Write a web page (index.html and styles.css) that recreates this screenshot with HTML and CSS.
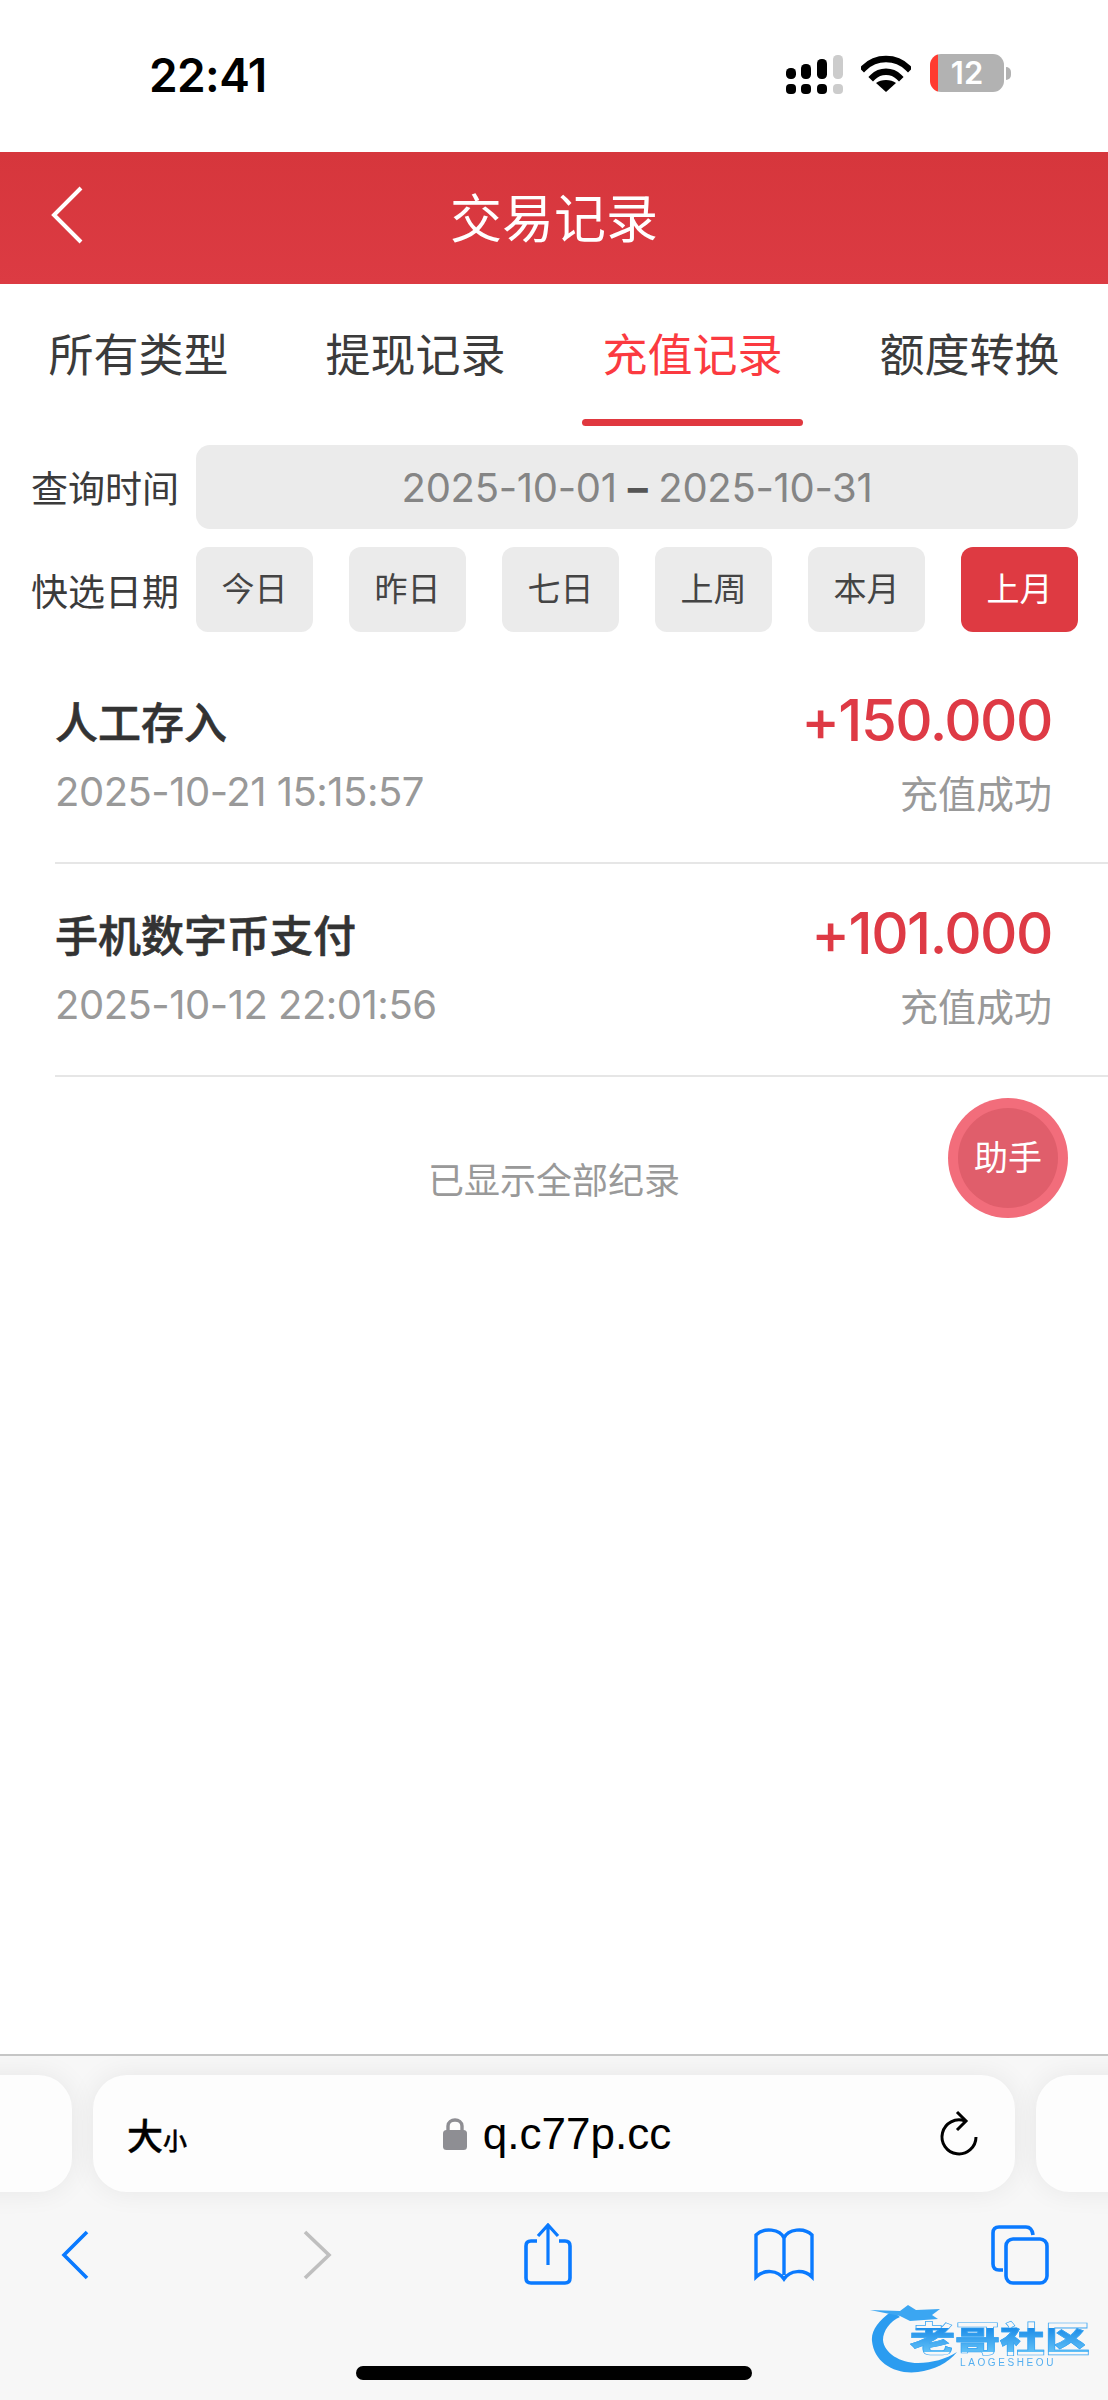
FILE: index.html
```html
<!DOCTYPE html>
<html lang="zh-CN">
<head>
    <meta charset="UTF-8">
    <meta name="viewport" content="width=device-width, initial-scale=1.0">
    <title>交易记录</title>
    <link rel="stylesheet" href="styles.css">
</head>
<body>
<div class="page">

    <div class="status-bar">
        <span class="clock">22:41</span>
        <div class="status-icons">
            <svg class="signal" width="58" height="40" viewBox="0 0 58 40">
                <rect x="0" y="14" width="10" height="11" rx="4.5" fill="#000"/>
                <rect x="15" y="10" width="10" height="15" rx="4.5" fill="#000"/>
                <rect x="31" y="5" width="10" height="20" rx="4.5" fill="#000"/>
                <rect x="47" y="1" width="10" height="24" rx="4.5" fill="#ccc"/>
                <rect x="0" y="30" width="10" height="10" rx="4" fill="#000"/>
                <rect x="15" y="30" width="10" height="10" rx="4" fill="#000"/>
                <rect x="31" y="30" width="10" height="10" rx="4" fill="#000"/>
                <rect x="47" y="30" width="10" height="10" rx="4" fill="#ccc"/>
            </svg>
            <svg class="wifi" width="50" height="38" viewBox="0 0 50 38">
                <path d="M3 13 C15 1 35 1 47 13" fill="none" stroke="#000" stroke-width="6.5" stroke-linecap="square"/>
                <path d="M12 22 C19 15 31 15 38 22" fill="none" stroke="#000" stroke-width="6.5" stroke-linecap="square"/>
                <path d="M25 37 L15 28 C20 24 30 24 35 28 Z" fill="#000"/>
            </svg>
            <div class="battery">
                <div class="battery-body">12</div>
                <div class="battery-nub"></div>
            </div>
        </div>
    </div>

    <div class="title-bar">
        <svg class="back-arrow" width="34" height="58" viewBox="0 0 34 58">
            <path d="M31 2 L4 29 L31 56" fill="none" stroke="#fff" stroke-width="4"/>
        </svg>
        <h1>交易记录</h1>
    </div>

    <div class="tabs">
        <div class="tab">所有类型</div>
        <div class="tab">提现记录</div>
        <div class="tab active">充值记录</div>
        <div class="tab">额度转换</div>
    </div>

    <div class="filter-row first">
        <span class="filter-label">查询时间</span>
        <div class="date-range">2025-10-01 <b>–</b> 2025-10-31</div>
    </div>
    <div class="filter-row">
        <span class="filter-label">快选日期</span>
        <div class="quick-dates">
            <div class="quick-btn">今日</div>
            <div class="quick-btn">昨日</div>
            <div class="quick-btn">七日</div>
            <div class="quick-btn">上周</div>
            <div class="quick-btn">本月</div>
            <div class="quick-btn selected">上月</div>
        </div>
    </div>

    <div class="records">
        <div class="record">
            <div class="record-line">
                <span class="record-name">人工存入</span>
                <span class="record-amount">+150.000</span>
            </div>
            <div class="record-line sub">
                <span class="record-time">2025-10-21 15:15:57</span>
                <span class="record-state">充值成功</span>
            </div>
        </div>
        <div class="record">
            <div class="record-line">
                <span class="record-name">手机数字币支付</span>
                <span class="record-amount">+101.000</span>
            </div>
            <div class="record-line sub">
                <span class="record-time">2025-10-12 22:01:56</span>
                <span class="record-state">充值成功</span>
            </div>
        </div>
    </div>

    <div class="all-shown">已显示全部纪录</div>

    <div class="helper"><div class="helper-inner">助手</div></div>

    <div class="spacer"></div>

    <div class="browser">
        <div class="url-strip">
            <div class="url-pill"></div>
            <div class="url-pill main">
                <span class="text-size">大<small>小</small></span>
                <span class="address">
                    <svg width="24" height="33" viewBox="0 0 24 33">
                        <path d="M5 15 V9 C5 1 19 1 19 9 V15" fill="none" stroke="#8e8e93" stroke-width="3.4"/>
                        <rect x="0" y="13" width="24" height="20" rx="3.5" fill="#8e8e93"/>
                    </svg>
                    q.c77p.cc
                </span>
                <svg class="reload" width="40" height="48" viewBox="0 0 40 48">
                    <path d="M26 11 A17 17 0 1 0 37 27" fill="none" stroke="#000" stroke-width="3"/>
                    <path d="M18 2 L27 11 L18 20" fill="none" stroke="#000" stroke-width="3"/>
                </svg>
            </div>
            <div class="url-pill"></div>
        </div>

        <div class="nav-icons">
            <svg width="60" height="62" viewBox="0 0 60 62">
                <path d="M42 9 L19 32 L42 55" fill="none" stroke="#0a7aff" stroke-width="3.6"/>
            </svg>
            <svg class="forward" width="60" height="62" viewBox="0 0 60 62">
                <path d="M18 9 L42 32 L18 55" fill="none" stroke="#bfbfbf" stroke-width="3.6"/>
            </svg>
            <svg width="60" height="62" viewBox="0 0 60 62">
                <path d="M19 18 H13 Q8 18 8 23 V55 Q8 60 13 60 H47 Q52 60 52 55 V23 Q52 18 47 18 H41" fill="none" stroke="#0a7aff" stroke-width="3.6"/>
                <path d="M30 42 V3 M20 13 L30 2 L40 13" fill="none" stroke="#0a7aff" stroke-width="3.2"/>
            </svg>
            <svg width="60" height="62" viewBox="0 0 60 62">
                <path d="M30 15 C26 6 10 4 2 12 V54 C10 46 24 47 30 56 C36 47 50 46 58 54 V12 C50 4 34 6 30 15 Z M30 15 V52" fill="none" stroke="#0a7aff" stroke-width="3.4"/>
            </svg>
            <svg width="60" height="62" viewBox="0 0 60 62">
                <path d="M13 47 H9 Q3 47 3 41 V10 Q3 4 9 4 H36 Q42 4 43 12" fill="none" stroke="#0a7aff" stroke-width="3.6"/>
                <rect x="16" y="16" width="41" height="44" rx="7" fill="none" stroke="#0a7aff" stroke-width="3.6"/>
            </svg>
        </div>

        <div class="home-bar"></div>
    </div>

    <div class="watermark">
        <svg class="dragon" width="96" height="76" viewBox="0 0 96 76">
            <path d="M22 8 C8 18 1 28 2 38 C4 60 26 72 48 69 C64 67 78 60 87 49 C76 56 62 60 48 60 C30 60 14 50 13 37 C13 28 20 18 30 14 Z" fill="#2b9cf0"/>
            <path d="M0 7 L30 8 L38 2 L46 7 L70 6 L62 12 L68 16 L40 18 L30 13 Z" fill="#3ba6f2"/>
        </svg>
        <div class="mark-name">老哥社区</div>
        <div class="mark-sub">LAOGESHEOU</div>
    </div>

</div>
</body>
</html>
```

FILE: styles.css
```css
* {
    box-sizing: border-box;
    margin: 0;
    padding: 0;
}
body {
    font-family: "Liberation Sans", "Noto Sans CJK SC", sans-serif;
    background: #fff;
}
.page {
    position: relative;
    width: 1108px;
    height: 2400px;
    display: flex;
    flex-direction: column;
    overflow: hidden;
}

/* status bar */
.status-bar {
    height: 152px;
    flex: none;
    display: flex;
    justify-content: space-between;
    padding: 49px 97px 0 149px;
}
.clock {
    font-family: Inter, sans-serif;
    font-size: 46px;
    font-weight: 600;
    line-height: 52px;
    letter-spacing: -0.6px;
    color: #000;
}
.status-icons {
    display: flex;
    align-items: flex-start;
    padding-top: 5px;
}
.wifi {
    margin-left: 17px;
    margin-top: 1px;
}
.battery {
    display: flex;
    align-items: center;
    margin-left: 19px;
    height: 38px;
}
.battery-body {
    width: 74px;
    height: 38px;
    border-radius: 11px;
    background: linear-gradient(to right, #ff3b30 11%, #b2b2b2 11%);
    color: #fff;
    font-family: Inter, sans-serif;
    font-size: 31px;
    font-weight: 600;
    line-height: 38px;
    text-align: center;
}
.battery-nub {
    width: 5px;
    height: 13px;
    margin-left: 2px;
    border-radius: 0 5px 5px 0;
    background: #b2b2b2;
}

/* title bar */
.title-bar {
    height: 132px;
    flex: none;
    display: flex;
    align-items: center;
    justify-content: center;
    position: relative;
    background: linear-gradient(#d6363c, #dc3b43);
}
.title-bar h1 {
    font-size: 52px;
    font-weight: 400;
    color: #fff;
    padding-bottom: 6px;
}
.back-arrow {
    position: absolute;
    left: 50px;
    top: 34px;
}

/* tabs */
.tabs {
    display: flex;
    flex: none;
    padding-top: 43px;
}
.tab {
    flex: 1;
    display: flex;
    flex-direction: column;
    align-items: center;
    font-size: 45px;
    line-height: 60px;
    color: #3b3b3b;
}
.tab.active {
    color: #fb3a40;
}
.tab.active::after {
    content: "";
    display: block;
    width: 221px;
    height: 7px;
    margin-top: 32px;
    border-radius: 4px;
    background: #e0383f;
}

/* filter */
.filter-row {
    display: flex;
    flex: none;
    align-items: center;
    margin-top: 18px;
    padding: 0 30px 0 31px;
}
.filter-row.first {
    margin-top: 19px;
}
.filter-label {
    width: 165px;
    flex: none;
    font-size: 37px;
    color: #3b3b3b;
}
.date-range {
    flex: 1;
    height: 84px;
    line-height: 86px;
    border-radius: 14px;
    background: #ebebeb;
    text-align: center;
    font-family: Inter, sans-serif;
    font-size: 40px;
    letter-spacing: -0.3px;
    color: #858585;
}
.date-range b {
    color: #555;
}
.quick-dates {
    flex: 1;
    display: flex;
    justify-content: space-between;
}
.quick-btn {
    width: 117px;
    height: 85px;
    line-height: 86px;
    border-radius: 12px;
    background: #ebebeb;
    text-align: center;
    font-size: 33px;
    color: #444;
}
.quick-btn.selected {
    background: #de3a42;
    color: #fff;
}

/* list */
.records {
    margin-top: 19px;
    padding-left: 55px;
    flex: none;
}
.record {
    height: 213px;
    padding: 37px 56px 0 0;
    border-bottom: 2px solid #e6e6e6;
}
.record-line {
    display: flex;
    justify-content: space-between;
    align-items: center;
    height: 64px;
}
.record-line.sub {
    height: 60px;
    margin-top: 9px;
}
.record-name {
    font-size: 43px;
    font-weight: 500;
    color: #333;
    -webkit-text-stroke: 0.6px #333;
}
.record-amount {
    font-family: Inter, sans-serif;
    font-size: 58px;
    font-weight: 500;
    color: #de3a45;
    letter-spacing: -1.5px;
}
.record-time {
    font-family: Inter, sans-serif;
    font-size: 40px;
    letter-spacing: -0.5px;
    color: #999;
}
.record-state {
    font-size: 38px;
    color: #999;
}
.all-shown {
    margin-top: 80px;
    flex: none;
    text-align: center;
    font-size: 36px;
    line-height: 50px;
    color: #999;
}

/* floating helper */
.helper {
    position: absolute;
    left: 948px;
    top: 1098px;
    width: 120px;
    height: 120px;
    border-radius: 50%;
    background: #f26d7b;
    display: flex;
    align-items: center;
    justify-content: center;
}
.helper-inner {
    width: 100px;
    height: 100px;
    line-height: 100px;
    border-radius: 50%;
    background: #e05e6b;
    text-align: center;
    font-size: 34px;
    color: #fff;
}
.spacer {
    flex: 1;
}

/* browser chrome */
.browser {
    height: 346px;
    flex: none;
    background: #f7f7f7;
    border-top: 2px solid #c6c6c6;
    overflow: hidden;
}
.url-strip {
    display: flex;
    justify-content: center;
    gap: 21px;
    margin-top: 19px;
}
.url-pill {
    flex: none;
    width: 922px;
    height: 117px;
    border-radius: 34px;
    background: #fdfdfd;
    box-shadow: 0 0 28px rgba(0, 0, 0, 0.07);
}
.url-pill.main {
    display: flex;
    align-items: center;
    justify-content: space-between;
    padding: 0 36px 0 34px;
    color: #000;
}
.text-size {
    font-size: 36px;
    font-weight: 500;
    width: 188px;
    -webkit-text-stroke: 0.4px #000;
}
.text-size small {
    font-size: 24px;
}
.address {
    display: flex;
    align-items: center;
    gap: 16px;
    font-family: "Liberation Sans", sans-serif;
    font-size: 44px;
}
.reload {
    margin-left: 140px;
}
.nav-icons {
    display: flex;
    justify-content: space-between;
    padding: 0 58px 0 45px;
    margin-top: 31px;
}
.forward {
    margin-left: 6px;
    margin-right: -6px;
}
.home-bar {
    width: 396px;
    height: 14px;
    margin: 81px auto 0;
    border-radius: 7px;
    background: #000;
}

/* corner watermark */
.watermark {
    position: absolute;
    left: 870px;
    top: 2303px;
    width: 225px;
    height: 76px;
    filter: blur(0.5px);
}
.dragon {
    position: absolute;
    left: 0;
    top: 0;
}
.mark-name {
    position: absolute;
    left: 40px;
    top: 21px;
    font-size: 45px;
    line-height: 32px;
    font-weight: 900;
    white-space: nowrap;
    color: transparent;
    background: linear-gradient(#1c8ce8, #62c1f6);
    -webkit-background-clip: text;
    background-clip: text;
    -webkit-text-stroke: 0.8px #38a4f2;
    transform: scaleY(0.78);
}
.mark-sub {
    position: absolute;
    left: 90px;
    top: 54px;
    font-size: 10px;
    line-height: 12px;
    letter-spacing: 2.6px;
    color: #55aff0;
}
```
